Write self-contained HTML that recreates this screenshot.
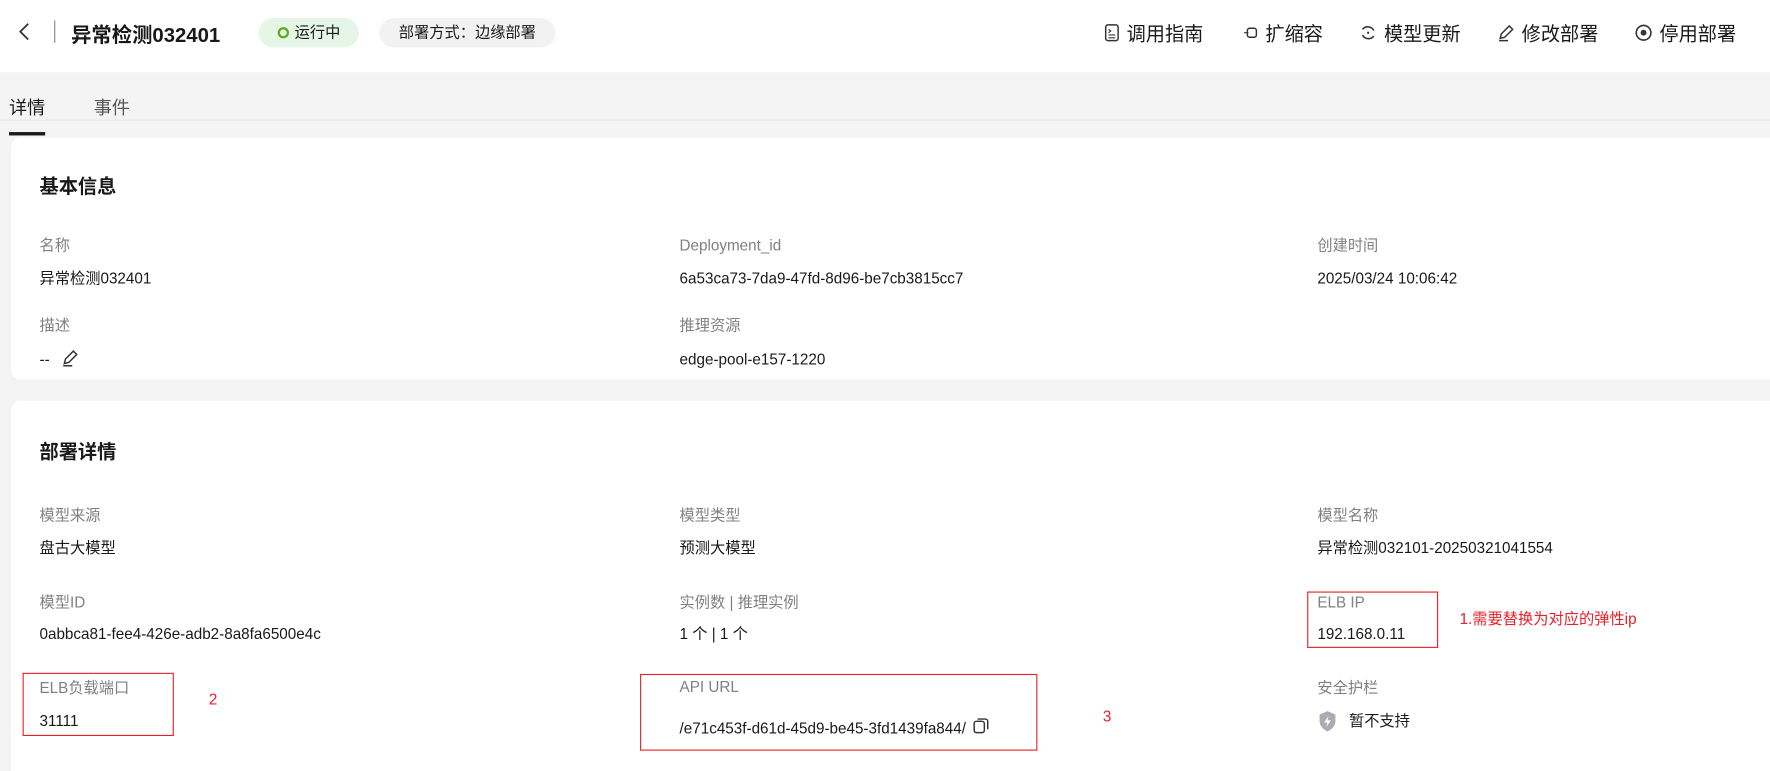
<!DOCTYPE html>
<html><head><meta charset="utf-8"><style>
*{margin:0;padding:0;box-sizing:border-box}
body{width:1770px;height:771px;overflow:hidden;background:#f4f4f4;font-family:"Liberation Sans","Noto Sans CJK SC",sans-serif;color:#191919}
.wrap{position:absolute;left:0;top:0;width:1568px;height:683px;transform:scale(1.12883);transform-origin:0 0;overflow:hidden}
.a{position:absolute;white-space:nowrap}
.hdr{position:absolute;left:0;top:0;width:1568px;height:64px;background:#fff}
.card{position:absolute;left:10px;width:1600px;background:#fff;border-radius:8px}
.lab{font-size:13.5px;color:#808080;line-height:18px}
.val{font-size:13.5px;color:#191919;line-height:18px}
.h2{font-size:17px;font-weight:bold}
.red{position:absolute;border:1px solid #e8202a}
.rt{color:#e8202a;font-size:13.5px;line-height:18px}
.act{font-size:17px;color:#191919;display:flex;align-items:center;gap:6px}
</style></head><body>
<div class="wrap">
<div class="hdr"></div>
<svg class="a" style="left:15px;top:19px" width="14" height="18" viewBox="0 0 14 18"><path d="M10 2 L3 9 L10 16" fill="none" stroke="#333" stroke-width="1.6"/></svg>
<div class="a" style="left:48px;top:18px;width:1px;height:20px;background:#888"></div>
<div class="a" style="left:63px;top:17px;font-size:18px;font-weight:bold">异常检测032401</div>
<div class="a" style="left:229px;top:16px;width:89px;height:26px;border-radius:13px;background:#e5f6e7;font-size:13.5px;line-height:26px;padding-left:32px">运行中</div>
<div class="a" style="left:246px;top:24px;width:10px;height:10px;border-radius:50%;border:2.5px solid #5aac18"></div>
<div class="a" style="left:336px;top:16px;width:156px;height:26px;border-radius:13px;background:#f2f2f2;font-size:13.5px;line-height:26px;text-align:center">部署方式：边缘部署</div>

<div class="a act" style="left:978px;top:16px"><svg width="14" height="16"><rect x="1.5" y="1" width="11" height="14" rx="2" fill="none" stroke="#333" stroke-width="1.3"/><path d="M4 5l2 1.5-2 1.5M4 10h6M4 12.5h6" stroke="#333" fill="none"/></svg>调用指南</div>
<div class="a act" style="left:1101px;top:16px"><svg width="14" height="16"><rect x="4" y="4" width="8" height="8" rx="2" fill="none" stroke="#333" stroke-width="1.3"/><path d="M1 8h4" stroke="#333"/></svg>扩缩容</div>
<div class="a act" style="left:1204px;top:16px"><svg width="16" height="16"><path d="M3 5A6 6 0 0 1 13 6M13 11A6 6 0 0 1 3 10" fill="none" stroke="#333" stroke-width="1.4"/><circle cx="8" cy="8" r="1" fill="#333"/></svg>模型更新</div>
<div class="a act" style="left:1326px;top:16px"><svg width="16" height="16"><path d="M3 13L4 9 11 2 14 5 7 12 3 13ZM2 15h8" fill="none" stroke="#333" stroke-width="1.3"/></svg>修改部署</div>
<div class="a act" style="left:1448px;top:16px"><svg width="16" height="16"><circle cx="8" cy="8" r="6.5" fill="none" stroke="#333" stroke-width="1.4"/><circle cx="8" cy="8" r="2.6" fill="#333"/></svg>停用部署</div>

<div class="a" style="left:8px;top:82px;font-size:16px">详情</div>
<div class="a" style="left:8px;top:117px;width:32px;height:3px;background:#191919"></div>
<div class="a" style="left:83px;top:82px;font-size:16px;color:#575757">事件</div>
<div class="a" style="left:0;top:106px;width:1568px;height:1px;background:#e6e6e6"></div>

<div class="card" style="top:122px;height:214px"></div>
<div class="a h2" style="left:35px;top:151px">基本信息</div>
<div class="a lab" style="left:35px;top:209px">名称</div>
<div class="a val" style="left:35px;top:238px">异常检测032401</div>
<div class="a lab" style="left:35px;top:280px">描述</div>
<div class="a val" style="left:35px;top:310px">--</div>
<svg class="a" style="left:54px;top:309px" width="16" height="16"><path d="M3 13L4 9 11 2 14 5 7 12 3 13ZM2 15h8" fill="none" stroke="#333" stroke-width="1.3"/></svg>
<div class="a lab" style="left:602px;top:209px">Deployment_id</div>
<div class="a val" style="left:602px;top:238px">6a53ca73-7da9-47fd-8d96-be7cb3815cc7</div>
<div class="a lab" style="left:602px;top:280px">推理资源</div>
<div class="a val" style="left:602px;top:310px">edge-pool-e157-1220</div>
<div class="a lab" style="left:1167px;top:209px">创建时间</div>
<div class="a val" style="left:1167px;top:238px">2025/03/24 10:06:42</div>

<div class="card" style="top:355px;height:345px"></div>
<div class="a h2" style="left:35px;top:386px">部署详情</div>
<div class="a lab" style="left:35px;top:448px">模型来源</div>
<div class="a val" style="left:35px;top:477px">盘古大模型</div>
<div class="a lab" style="left:602px;top:448px">模型类型</div>
<div class="a val" style="left:602px;top:477px">预测大模型</div>
<div class="a lab" style="left:1167px;top:448px">模型名称</div>
<div class="a val" style="left:1167px;top:477px">异常检测032101-20250321041554</div>

<div class="a lab" style="left:35px;top:525px">模型ID</div>
<div class="a val" style="left:35px;top:553px">0abbca81-fee4-426e-adb2-8a8fa6500e4c</div>
<div class="a lab" style="left:602px;top:525px">实例数 | 推理实例</div>
<div class="a val" style="left:602px;top:553px">1 个 | 1 个</div>
<div class="a lab" style="left:1167px;top:525px">ELB IP</div>
<div class="a val" style="left:1167px;top:553px">192.168.0.11</div>
<div class="red" style="left:1158px;top:524px;width:116px;height:50px"></div>
<div class="a rt" style="left:1293px;top:540px">1.需要替换为对应的弹性ip</div>

<div class="a lab" style="left:35px;top:601px">ELB负载端口</div>
<div class="a val" style="left:35px;top:630px">31111</div>
<div class="red" style="left:20px;top:596px;width:134px;height:56px"></div>
<div class="a rt" style="left:185px;top:611px">2</div>
<div class="a lab" style="left:602px;top:600px">API URL</div>
<div class="a val" style="left:602px;top:637px">/e71c453f-d61d-45d9-be45-3fd1439fa844/</div>
<svg class="a" style="left:861px;top:635px" width="16" height="16"><rect x="2" y="4" width="9" height="10" rx="2" fill="none" stroke="#333" stroke-width="1.3"/><path d="M5 2h7a2 2 0 0 1 2 2v7" fill="none" stroke="#333" stroke-width="1.3"/></svg>
<div class="red" style="left:567px;top:597px;width:352px;height:68px"></div>
<div class="a rt" style="left:977px;top:626px">3</div>
<div class="a lab" style="left:1167px;top:601px">安全护栏</div>
<svg class="a" style="left:1167px;top:629px" width="18" height="20"><path d="M9 1L16 4v6c0 4-3 7-7 9-4-2-7-5-7-9V4Z" fill="#a8adb3"/><path d="M10 5L6 11h3l-1 4 4-6H9Z" fill="#fff"/></svg>
<div class="a val" style="left:1195px;top:630px">暂不支持</div>
</div>
</body></html>
